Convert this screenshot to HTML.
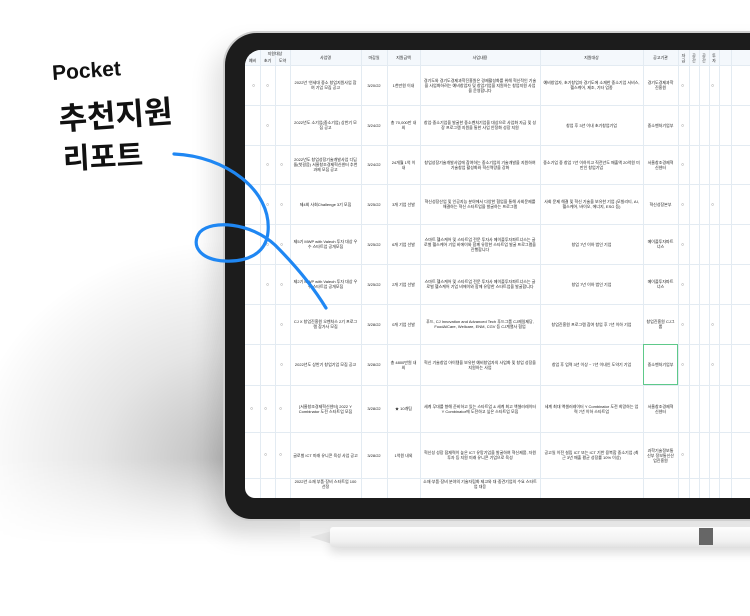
<!DOCTYPE html>
<html><head><meta charset="utf-8"><style>
*{margin:0;padding:0;box-sizing:border-box}
body{width:750px;height:616px;overflow:hidden;background:#fff;position:relative;font-family:"Liberation Sans","Noto Sans CJK KR",sans-serif}
.shadow{position:absolute;left:0;top:200px;width:300px;height:345px;background:radial-gradient(ellipse 260px 220px at 230px 260px,rgba(0,0,0,.26),rgba(0,0,0,.1) 50%,rgba(0,0,0,0) 100%);-webkit-mask-image:linear-gradient(to bottom,#000 75%,transparent 100%);mask-image:linear-gradient(to bottom,#000 75%,transparent 100%)}
.tablet{position:absolute;left:223px;top:31px;width:560px;height:490px;background:#1c1c1c;border-radius:34px 0 0 28px;border:2px solid #cfcfcf;border-right:none;box-shadow:-10px 14px 24px rgba(0,0,0,.12)}
.screen{position:absolute;left:245px;top:50px;width:505px;height:448px;background:#fff;border-radius:16px 0 0 10px;overflow:hidden}
.c{position:absolute;font-size:4px;line-height:5px;color:#1a1a1a;text-align:center;display:flex;align-items:center;justify-content:center;padding:0 3px}
.vl{position:absolute;top:0;bottom:0;width:1px;background:#e3ebf2}
.hl{position:absolute;left:0;right:0;height:1px;background:#e3ebf2}
.hdr{position:absolute;left:0;right:0;top:0;height:15px;background:#f4f8fc}
.o{position:absolute;font-size:5px;color:#555}
.txt{position:absolute;font-weight:bold;color:#111;transform-origin:left bottom}
.pen{position:absolute;left:330px;top:527px;width:440px;height:20px;background:linear-gradient(#fdfdfd,#f1f1f1 70%,#e2e2e2);border-radius:3px;box-shadow:0 6px 10px rgba(0,0,0,.12)}
.tip{position:absolute;left:310px;top:531px;width:0;height:0;border-top:6px solid transparent;border-bottom:7px solid transparent;border-right:22px solid #e4e4e4}
.band{position:absolute;left:699px;top:528px;width:14px;height:17px;background:#666}
</style></head><body>
<div class="shadow"></div>
<div class="tablet"></div>
<div class="screen">
<div class="hdr"></div>
<div class="vl" style="left:15px"></div><div class="vl" style="left:30px"></div><div class="vl" style="left:45px"></div><div class="vl" style="left:116px"></div><div class="vl" style="left:142px"></div><div class="vl" style="left:175px"></div><div class="vl" style="left:295px"></div><div class="vl" style="left:398px"></div><div class="vl" style="left:433px"></div><div class="vl" style="left:444px"></div><div class="vl" style="left:454px"></div><div class="vl" style="left:464px"></div><div class="vl" style="left:474px"></div><div class="vl" style="left:486px"></div>
<div class="hl" style="top:15px"></div><div class="hl" style="top:55px"></div><div class="hl" style="top:95px"></div><div class="hl" style="top:134px"></div><div class="hl" style="top:174px"></div><div class="hl" style="top:214px"></div><div class="hl" style="top:254px"></div><div class="hl" style="top:294px"></div><div class="hl" style="top:335px"></div><div class="hl" style="top:382px"></div><div class="hl" style="top:428px"></div>
<div class="c" style="left:10px;top:0;width:40px;height:6px">지원대상</div>
<div class="c" style="left:0;top:6px;width:15px;height:9px">예비</div><div class="c" style="left:15px;top:6px;width:15px;height:9px">초기</div><div class="c" style="left:30px;top:6px;width:15px;height:9px">도약</div>
<div class="c" style="left:45px;top:0;width:71px;height:15px">사업명</div><div class="c" style="left:116px;top:0;width:26px;height:15px">마감일</div><div class="c" style="left:142px;top:0;width:33px;height:15px">지원금액</div><div class="c" style="left:175px;top:0;width:120px;height:15px">사업내용</div><div class="c" style="left:295px;top:0;width:103px;height:15px">지원대상</div><div class="c" style="left:398px;top:0;width:35px;height:15px">공고기관</div><div class="c" style="left:433px;top:0;width:11px;height:15px">자금</div><div class="c" style="left:444px;top:0;width:10px;height:15px">공간</div><div class="c" style="left:454px;top:0;width:10px;height:15px">공간</div><div class="c" style="left:464px;top:0;width:10px;height:15px">투자</div>

<div class="c" style="left:45px;top:15px;width:71px;height:40px">2022년 '연세대 중소 창업지원사업 참여 기업 모집 공고</div><div class="c" style="left:116px;top:15px;width:26px;height:40px">3/20/22</div><div class="c" style="left:142px;top:15px;width:33px;height:40px">1천만원 이내</div><div class="c" style="left:175px;top:15px;width:120px;height:40px">경기도와 경기도경제과학진흥원은 경제활성화를 위해 혁신적인 기술을 사업화하려는 예비창업자 및 창업기업을 지원하는 창업지원 사업을 운영합니다</div><div class="c" style="left:295px;top:15px;width:103px;height:40px">예비창업자, 초기창업자 경기도에 소재한 중소기업 서비스, 헬스케어, 제조, 기타 업종</div><div class="c" style="left:398px;top:15px;width:35px;height:40px">경기도경제과학진흥원</div>
<div class="c" style="left:45px;top:55px;width:71px;height:40px">2022년도 소기업(중소기업) 상반기 모집 공고</div><div class="c" style="left:116px;top:55px;width:26px;height:40px">3/24/22</div><div class="c" style="left:142px;top:55px;width:33px;height:40px">총 70,000만 내외</div><div class="c" style="left:175px;top:55px;width:120px;height:40px">창업·중소기업을 발굴한 중소벤처기업을 대상으로 사업화 자금 및 성장 프로그램 지원을 통한 사업 안정화 성장 지원</div><div class="c" style="left:295px;top:55px;width:103px;height:40px">창업 후 3년 이내 초기창업기업</div><div class="c" style="left:398px;top:55px;width:35px;height:40px">중소벤처기업부</div>
<div class="c" style="left:45px;top:95px;width:71px;height:39px">2022년도 창업성장기술개발사업 디딤돌(첫걸음) 서울창조경제혁신센터 추천 과제 모집 공고</div><div class="c" style="left:116px;top:95px;width:26px;height:39px">3/24/22</div><div class="c" style="left:142px;top:95px;width:33px;height:39px">24개월 1억 이내</div><div class="c" style="left:175px;top:95px;width:120px;height:39px">창업성장기술개발사업에 참여하는 중소기업의 기술개발을 지원하여 기술창업 활성화와 혁신역량을 강화</div><div class="c" style="left:295px;top:95px;width:103px;height:39px">중소기업 중 창업 7년 이하이고 직전년도 매출액 20억원 미만인 창업기업</div><div class="c" style="left:398px;top:95px;width:35px;height:39px">서울창조경제혁신센터</div>
<div class="c" style="left:45px;top:134px;width:71px;height:40px">제4회 사회Challenge 3기 모집</div><div class="c" style="left:116px;top:134px;width:26px;height:40px">3/25/22</div><div class="c" style="left:142px;top:134px;width:33px;height:40px">3개 기업 선발</div><div class="c" style="left:175px;top:134px;width:120px;height:40px">혁신성장산업 및 인공지능 분야에서 다양한 협업을 통해 사회문제를 해결하는 혁신 스타트업을 발굴하는 프로그램</div><div class="c" style="left:295px;top:134px;width:103px;height:40px">사회 문제 해결 및 혁신 기술을 보유한 기업 (모빌리티, AI, 헬스케어, 바이오, 에너지, ESG 등)</div><div class="c" style="left:398px;top:134px;width:35px;height:40px">혁신성장본부</div>
<div class="c" style="left:45px;top:174px;width:71px;height:40px">제5기 MWP with Valeoh 투자 대상 우수 스타트업 공개모집</div><div class="c" style="left:116px;top:174px;width:26px;height:40px">3/25/22</div><div class="c" style="left:142px;top:174px;width:33px;height:40px">6개 기업 선발</div><div class="c" style="left:175px;top:174px;width:120px;height:40px">스마트 헬스케어 및 스타트업 전문 투자사 메이플투자파트너스는 글로벌 헬스케어 기업 비에이와 함께 유망한 스타트업 발굴 프로그램을 진행합니다</div><div class="c" style="left:295px;top:174px;width:103px;height:40px">창업 7년 이하 법인 기업</div><div class="c" style="left:398px;top:174px;width:35px;height:40px">메이플투자파트너스</div>
<div class="c" style="left:45px;top:214px;width:71px;height:40px">제2기 MWP with Valeoh 투자 대상 우수 스타트업 공개모집</div><div class="c" style="left:116px;top:214px;width:26px;height:40px">3/25/22</div><div class="c" style="left:142px;top:214px;width:33px;height:40px">2개 기업 선발</div><div class="c" style="left:175px;top:214px;width:120px;height:40px">스마트 헬스케어 및 스타트업 전문 투자사 메이플투자파트너스는 글로벌 헬스케어 기업 비에이와 함께 유망한 스타트업을 발굴합니다</div><div class="c" style="left:295px;top:214px;width:103px;height:40px">창업 7년 이하 법인 기업</div><div class="c" style="left:398px;top:214px;width:35px;height:40px">메이플투자파트너스</div>
<div class="c" style="left:45px;top:254px;width:71px;height:40px">CJ X 창업진흥원 오벤처스 2기 프로그램 참가사 모집</div><div class="c" style="left:116px;top:254px;width:26px;height:40px">3/28/22</div><div class="c" style="left:142px;top:254px;width:33px;height:40px">0개 기업 선발</div><div class="c" style="left:175px;top:254px;width:120px;height:40px">푸드, CJ Innovation and Advanced Tech 푸드그룹 CJ제일제당, FoodAiCare, Wellcare, ENM, CGV 등 CJ계열사 협업</div><div class="c" style="left:295px;top:254px;width:103px;height:40px">창업진흥원 프로그램 참여 창업 후 7년 이하 기업</div><div class="c" style="left:398px;top:254px;width:35px;height:40px">창업진흥원 CJ그룹</div>
<div class="c" style="left:45px;top:294px;width:71px;height:41px">2022년도 상반기 창업기업 모집 공고</div><div class="c" style="left:116px;top:294px;width:26px;height:41px">3/28/22</div><div class="c" style="left:142px;top:294px;width:33px;height:41px">총 4800만원 내외</div><div class="c" style="left:175px;top:294px;width:120px;height:41px">혁신 기술창업 아이템을 보유한 예비창업자의 사업화 및 창업 성장을 지원하는 사업</div><div class="c" style="left:295px;top:294px;width:103px;height:41px">창업 후 업력 3년 이상 ~ 7년 이내인 도약기 기업</div><div class="c" style="left:398px;top:294px;width:35px;height:41px;border:1px solid #5ec98a">중소벤처기업부</div>
<div class="c" style="left:45px;top:335px;width:71px;height:47px">[서울창조경제혁신센터] 2022 Y Combinator 도전 스타트업 모집</div><div class="c" style="left:116px;top:335px;width:26px;height:47px">3/28/22</div><div class="c" style="left:142px;top:335px;width:33px;height:47px">★ 10개팀</div><div class="c" style="left:175px;top:335px;width:120px;height:47px">세계 무대를 향해 준비하고 있는 스타트업 & 세계 최고 액셀러레이터 Y Combinator에 도전하고 싶은 스타트업 모집</div><div class="c" style="left:295px;top:335px;width:103px;height:47px">세계 최대 액셀러레이터 Y Combinator 도전 희망하는 업력 7년 이하 스타트업</div><div class="c" style="left:398px;top:335px;width:35px;height:47px">서울창조경제혁신센터</div>
<div class="c" style="left:45px;top:382px;width:71px;height:46px">글로벌 ICT 미래 유니콘 육성 사업 공고</div><div class="c" style="left:116px;top:382px;width:26px;height:46px">3/28/22</div><div class="c" style="left:142px;top:382px;width:33px;height:46px">1억원 내외</div><div class="c" style="left:175px;top:382px;width:120px;height:46px">혁신성 성장 잠재력이 높은 ICT 유망기업을 발굴하여 혁신제품, 자원투자 등 지원 미래 유니콘 기업으로 육성</div><div class="c" style="left:295px;top:382px;width:103px;height:46px">공고일 이전 설립 ICT 또는 ICT 기반 융복합 중소기업 (최근 3년 매출 평균 성장률 10% 이상)</div><div class="c" style="left:398px;top:382px;width:35px;height:46px">과학기술정보통신부 정보통신산업진흥원</div>
<div class="c" style="left:45px;top:428px;width:71px;height:12px">2022년 소재 부품·장비 스타트업 100 선정</div><div class="c" style="left:175px;top:428px;width:120px;height:12px">소재·부품·장비 분야의 기술자립화 제고와 대·중견기업의 수요 스타트업 대응</div>

<div class="o" style="left:7px;top:33px">○</div><div class="o" style="left:21px;top:33px">○</div><div class="o" style="left:436px;top:33px">○</div><div class="o" style="left:466px;top:33px">○</div>
<div class="o" style="left:21px;top:73px">○</div><div class="o" style="left:436px;top:73px">○</div>
<div class="o" style="left:21px;top:112px">○</div><div class="o" style="left:35px;top:112px">○</div><div class="o" style="left:436px;top:112px">○</div>
<div class="o" style="left:21px;top:152px">○</div><div class="o" style="left:35px;top:152px">○</div><div class="o" style="left:436px;top:152px">○</div><div class="o" style="left:466px;top:152px">○</div>
<div class="o" style="left:21px;top:192px">○</div><div class="o" style="left:35px;top:192px">○</div><div class="o" style="left:436px;top:192px">○</div>
<div class="o" style="left:21px;top:232px">○</div><div class="o" style="left:35px;top:232px">○</div><div class="o" style="left:436px;top:232px">○</div>
<div class="o" style="left:35px;top:272px">○</div><div class="o" style="left:436px;top:272px">○</div><div class="o" style="left:466px;top:272px">○</div>
<div class="o" style="left:35px;top:312px">○</div><div class="o" style="left:436px;top:312px">○</div><div class="o" style="left:466px;top:312px">○</div>
<div class="o" style="left:5px;top:356px">○</div><div class="o" style="left:19px;top:356px">○</div><div class="o" style="left:34px;top:356px">○</div>
<div class="o" style="left:19px;top:402px">○</div><div class="o" style="left:34px;top:402px">○</div><div class="o" style="left:436px;top:402px">○</div>
</div>

<div class="tip"></div><div class="pen"></div><div class="band"></div>

<div class="txt" style="left:53px;top:62px;font-size:21px;transform:rotate(-4deg)">Pocket</div>
<div class="txt" style="left:60px;top:94px;font-size:31px;transform:rotate(-4deg)">추천지원</div>
<div class="txt" style="left:64px;top:136px;font-size:29px;transform:rotate(-3deg)">리포트</div>

<svg width="750" height="616" style="position:absolute;left:0;top:0">
<path d="M174,154 C225,156 272,190 268,232 C266,255 245,262 225,261 C200,260 190,245 200,232 C212,220 250,222 275,245 C295,265 312,285 326,308" fill="none" stroke="#1f87f3" stroke-width="3.2" stroke-linecap="round"/>
</svg>
</body></html>
